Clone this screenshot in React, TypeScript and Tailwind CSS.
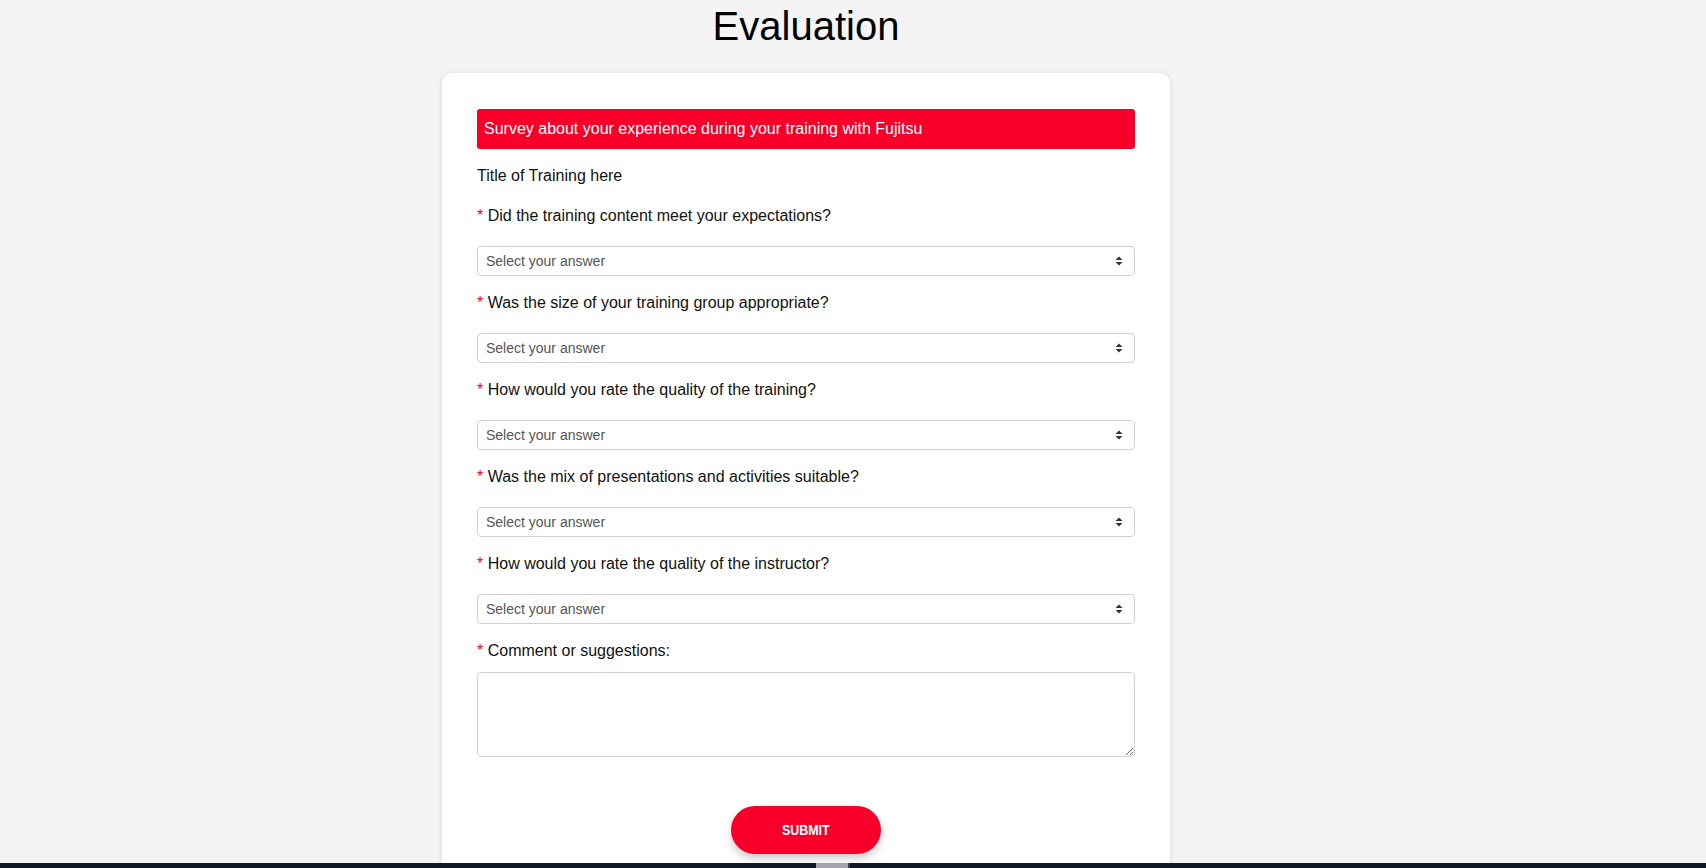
import React from "react";

const questions = [
  "Did the training content meet your expectations?",
  "Was the size of your training group appropriate?",
  "How would you rate the quality of the training?",
  "Was the mix of presentations and activities suitable?",
  "How would you rate the quality of the instructor?",
];

function SortArrows() {
  return (
    <svg width="8" height="11" viewBox="0 0 8 11" className="pointer-events-none absolute right-[12px] top-1/2 -translate-y-1/2" aria-hidden="true">
      <path d="M0.5 4.5 L4 1 L7.5 4.5 Z" fill="#333" />
      <path d="M0.5 6.5 L4 10 L7.5 6.5 Z" fill="#333" />
    </svg>
  );
}

function Label({ children }: { children: React.ReactNode }) {
  return (
    <p className="text-[16px] leading-[18px] text-[#111]">
      <span className="text-[#f60029]">*</span> {children}
    </p>
  );
}

function AnswerSelect() {
  return (
    <div className="relative mt-[21px] h-[30px]">
      <select
        defaultValue=""
        className="h-full w-full appearance-none rounded-[4px] border border-[#ced2d8] bg-white pl-[8px] pr-8 text-[14px] text-[#555] outline-none"
      >
        <option value="" disabled>
          Select your answer
        </option>
        <option>Yes</option>
        <option>No</option>
      </select>
      <SortArrows />
    </div>
  );
}

export default function App() {
  return (
    <div className="min-h-screen bg-[#f4f4f4] font-['Liberation_Sans',Arial,sans-serif] text-black">
      <div className="flex w-[1612px] flex-col items-center pt-[3px] pb-10">
        <h1 className="text-[40px] font-normal leading-[46px]">Evaluation</h1>

        <form className="mt-[24px] flex w-[728px] flex-col rounded-[10px] bg-white px-[35px] pt-[36px] pb-[30px] shadow-[0_1px_6px_rgba(0,0,0,0.12)]">
          <div className="flex h-10 items-center rounded-[3px] bg-[#f60029] px-[7px] text-[16px] text-white">
            Survey about your experience during your training with Fujitsu
          </div>

          <p className="mt-[18px] text-[16px] leading-[18px] text-[#111]">Title of Training here</p>

          <div className="mt-[22px] flex flex-col">
            {questions.map((q, i) => (
              <div key={q} className={i === 0 ? "" : "mt-[18px]"}>
                <Label>{q}</Label>
                <AnswerSelect />
              </div>
            ))}

            <div className="mt-[18px]">
              <Label>Comment or suggestions:</Label>
              <textarea className="mt-[12px] block h-[85px] w-full rounded-[4px] border border-[#ced2d8] bg-white p-2 text-[14px] outline-none" />
            </div>
          </div>

          <button
            type="button"
            className="mx-auto mt-[49px] h-[48px] w-[150px] rounded-full bg-[#f60029] text-[15px] font-bold text-white shadow-[0_4px_8px_rgba(0,0,0,0.22)]"
          >
            <span className="inline-block scale-x-[0.83]">SUBMIT</span>
          </button>
        </form>
      </div>

      <div className="fixed bottom-0 left-0 right-0 flex h-[5px] bg-[#131826]">
        <div className="w-[816px]" />
        <div className="w-[32px] bg-[#a4a4ac]" />
        <div className="w-[2px] bg-[#3a3f4a]" />
      </div>
    </div>
  );
}
